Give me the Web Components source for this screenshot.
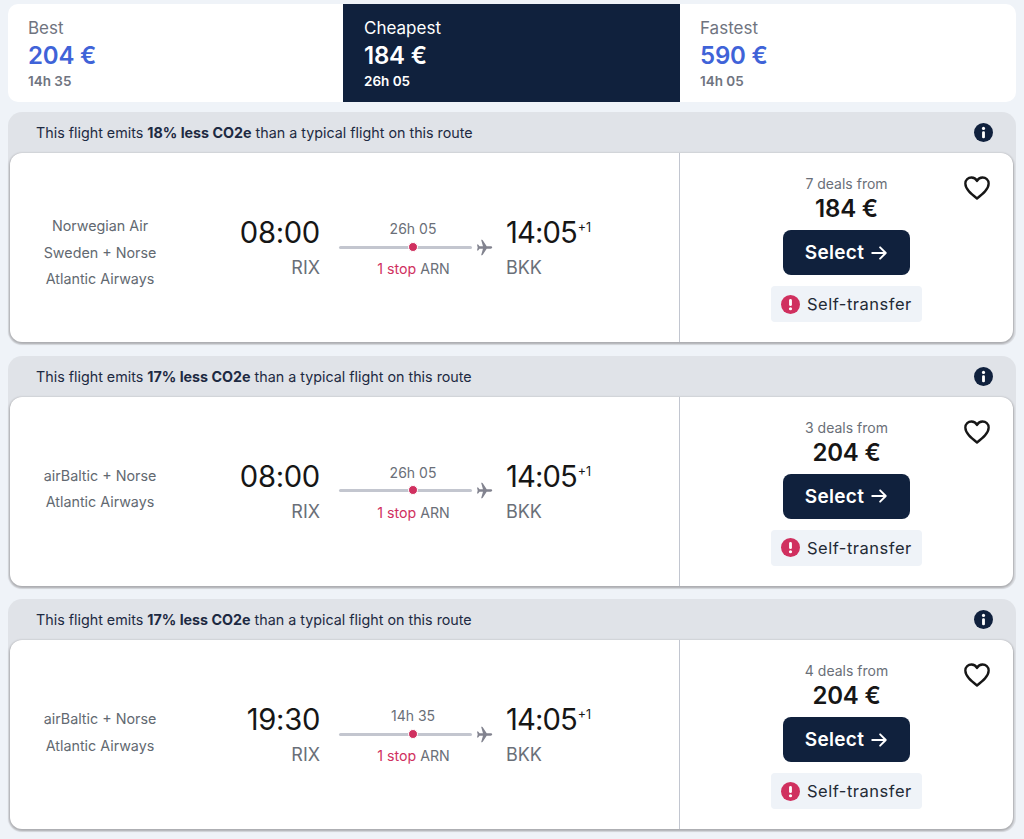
<!DOCTYPE html>
<html>
<head>
<meta charset="utf-8">
<title>Flights</title>
<style>
  html, body { margin: 0; padding: 0; background: #eff3f8; }
  body { font-family: Inter, "Liberation Sans", sans-serif; width: 1024px; height: 839px; overflow: hidden; }
  main { display: flex; flex-direction: column; gap: 10px; padding: 4px 8px 0; }
  .results { display: flex; flex-direction: column; gap: 10.5px; }
</style>
</head>
<body>
<main>
  <sort-tabs>
    <sort-tab label="Best" price="204 €" time="14h 35"></sort-tab>
    <sort-tab label="Cheapest" price="184 €" time="26h 05" active></sort-tab>
    <sort-tab label="Fastest" price="590 €" time="14h 05"></sort-tab>
  </sort-tabs>
  <div class="results">
    <flight-card long percent="18" depart="08:00" duration="26h 05" deals="7 deals from" price="184 €">
      <span>Norwegian Air</span><span>Sweden + Norse</span><span>Atlantic Airways</span>
    </flight-card>
    <flight-card percent="17" depart="08:00" duration="26h 05" deals="3 deals from" price="204 €">
      <span>airBaltic + Norse</span><span>Atlantic Airways</span>
    </flight-card>
    <flight-card percent="17" depart="19:30" duration="14h 35" deals="4 deals from" price="204 €">
      <span>airBaltic + Norse</span><span>Atlantic Airways</span>
    </flight-card>
  </div>
</main>

<script>
class SortTabs extends HTMLElement {
  constructor() {
    super();
    this.attachShadow({ mode: 'open' });
    this.shadowRoot.innerHTML = `
      <style>
        :host {
          display: grid;
          grid-template-columns: 335px 337px 336px;
          height: 98px;
          background: #fff;
          border-radius: 10px;
          overflow: hidden;
        }
      </style>
      <slot></slot>
    `;
  }
}

class SortTab extends HTMLElement {
  constructor() {
    super();
    this.attachShadow({ mode: 'open' });
    this.shadowRoot.innerHTML = `
      <style>
        :host {
          display: block;
          padding: 14px 20px 0;
          color: #6f7480;
        }
        :host([active]) { background: #10213d; color: #fff; padding-left: 21px; }
        .label { font-size: 17px; line-height: 20px; }
        .price { font-size: 24px; line-height: 32px; margin-top: 2px; font-weight: 600; color: #3f63d8; letter-spacing: -0.2px; }
        :host([active]) .price { color: #fff; }
        .time { font-size: 13.5px; line-height: 20px; margin-top: -1px; font-weight: 600; }
      </style>
      <div class="label"></div>
      <div class="price"></div>
      <div class="time"></div>
    `;
    this.shadowRoot.querySelector('.label').textContent = this.getAttribute('label');
    this.shadowRoot.querySelector('.price').textContent = this.getAttribute('price');
    this.shadowRoot.querySelector('.time').textContent = this.getAttribute('time');
  }
}

class FlightCard extends HTMLElement {
  constructor() {
    super();
    this.attachShadow({ mode: 'open' });
    this.shadowRoot.innerHTML = `
      <style>
        :host {
          display: block;
          height: 233px;
          background: #e0e3e8;
          border-radius: 14px;
          color: #161d2b;
        }
        .eco {
          display: flex;
          align-items: center;
          justify-content: space-between;
          height: 41px;
          padding: 0 23px 0 28px;
          font-size: 14.3px;
          color: #1d2a42;
        }
        .eco b { font-weight: 700; }
        .eco svg { width: 19px; height: 19px; display: block; }
        .card {
          display: grid;
          grid-template-columns: 670px 1fr;
          height: 189px;
          margin: 0 3px 0 2px;
          background: #fff;
          border-radius: 12px;
          box-shadow: 0 1px 2px 1px rgba(37, 32, 31, 0.28);
        }
        .left {
          display: grid;
          grid-template-columns: 180px 1fr;
          align-items: center;
          border-right: 1px solid #c2c6d0;
        }
        .airlines {
          display: flex;
          flex-direction: column;
          align-items: center;
          gap: 6.5px;
          font-size: 14.3px;
          line-height: 20px;
          color: #626971;
          margin-bottom: 4px;
        }
        :host([long]) .airlines { margin: 10px 0 0; }
        ::slotted(span) { display: block; }
        .route {
          display: grid;
          grid-template-columns: 82px auto 1fr;
          margin-left: 48px;
          align-items: start;
        }
        .point { display: flex; flex-direction: column; }
        .point.from { align-items: flex-end; }
        .point.to { margin-left: 13px; }
        .clock { font-size: 29.2px; line-height: 36px; color: #161616; letter-spacing: -0.3px; white-space: nowrap; }
        .to .clock { letter-spacing: -0.9px; }
        .clock sup { font-size: 12.5px; line-height: 0; vertical-align: 11px; letter-spacing: 0; margin-left: 1px; }
        .code { font-size: 18px; line-height: 24px; color: #6a6f78; margin-top: 5px; }
        .mid { display: flex; flex-direction: column; align-items: center; width: 154px; margin-left: 19px; }
        .duration { font-size: 14px; line-height: 17px; padding-top: 5px; color: #6a6f78; width: 148px; text-align: center; margin-right: 6px; }
        .line { display: flex; align-items: center; height: 20px; width: 154px; }
        .track { position: relative; width: 134px; height: 3px; border-radius: 2px; background: #c3c6cf; }
        .dot { position: absolute; left: 69px; top: -4px; width: 8px; height: 8px; border-radius: 50%; background: #d0305f; border: 1.5px solid #fff; }
        .line svg { width: 17px; height: 17px; margin-left: 4px; fill: #82838f; display: block; }
        .stops { font-size: 14.2px; line-height: 20px; margin-top: 2px; color: #6a6f78; width: 148px; text-align: center; margin-right: 5px; }
        .stops span { color: #d0305f; }
        .right { position: relative; display: flex; flex-direction: column; align-items: center; padding-top: 22px; }
        .deals { font-size: 14px; line-height: 18px; color: #6a6f78; }
        .price { font-size: 24px; line-height: 32px; font-weight: 600; color: #161616; letter-spacing: -0.2px; }
        .select {
          display: flex;
          align-items: center;
          justify-content: center;
          gap: 6px;
          box-sizing: border-box;
          width: 127px;
          height: 45px;
          margin-top: 5px;
          background: #10213d;
          color: #fff;
          border: 0;
          border-radius: 8px;
          font: 600 19px Inter, "Liberation Sans", sans-serif;
          letter-spacing: 0.3px;
        }
        .select svg { width: 18px; height: 18px; display: block; }
        .warn {
          display: flex;
          align-items: center;
          gap: 7px;
          box-sizing: border-box;
          width: 151px;
          height: 36px;
          margin-top: 11px;
          padding-left: 10px;
          background: #eff3f8;
          border-radius: 4px;
          font-size: 16.5px;
          letter-spacing: 0.5px;
          color: #232a35;
        }
        .warn svg { width: 19px; height: 19px; flex: none; display: block; }
        .heart { position: absolute; top: 21px; right: 22px; width: 28px; height: 28px; display: block; }
      </style>
      <div class="eco">
        <div>This flight emits <b>${this.getAttribute('percent')}% less CO2e</b> than a typical flight on this route</div>
        <svg viewBox="0 0 24 24"><circle cx="12" cy="12" r="12" fill="#10213d"/><circle cx="12" cy="6.8" r="2" fill="#fff"/><rect x="10.2" y="10.4" width="3.6" height="8.8" rx="1.6" fill="#fff"/></svg>
      </div>
      <div class="card">
        <div class="left">
          <div class="airlines"><slot></slot></div>
          <div class="route">
            <div class="point from">
              <div class="clock">${this.getAttribute('depart')}</div>
              <div class="code">RIX</div>
            </div>
            <div class="mid">
              <div class="duration">${this.getAttribute('duration')}</div>
              <div class="line">
                <div class="track"><div class="dot"></div></div>
                <svg viewBox="0 0 24 24"><path d="M23 12c0-1-1-1.700-2.200-1.700h-5.600L9.600 1.600C9.400 1.300 9 1 8.600 1H7.300l2.600 9.300H5L3 7.700H1.400l1 4.300-1 4.300H3l2-2.600h4.900L7.300 23h1.300c.4 0 .8-.3 1-.6l5.600-8.700h5.600C22 13.700 23 13 23 12z"/></svg>
              </div>
              <div class="stops"><span>1 stop</span> ARN</div>
            </div>
            <div class="point to">
              <div class="clock">14:05<sup>+1</sup></div>
              <div class="code">BKK</div>
            </div>
          </div>
        </div>
        <div class="right">
          <div class="deals">${this.getAttribute('deals')}</div>
          <div class="price">${this.getAttribute('price')}</div>
          <button class="select">Select <svg viewBox="0 0 24 24" fill="none" stroke="#fff" stroke-width="2.6" stroke-linecap="round" stroke-linejoin="round"><path d="M3 12h18M13.500 4.500 21 12l-7.500 7.500"/></svg></button>
          <div class="warn">
            <svg viewBox="0 0 24 24"><circle cx="12" cy="12" r="12" fill="#d0305f"/><rect x="10.200" y="5" width="3.600" height="9" rx="1.800" fill="#fff"/><circle cx="12" cy="17.400" r="2" fill="#fff"/></svg>
            <span>Self-transfer</span>
          </div>
          <svg class="heart" viewBox="0 0 24 24" fill="none" stroke="#161616" stroke-width="2" stroke-linejoin="round"><path d="M12 21C7 17 2 13 2 8.200 2 5 4.500 3 7.200 3 9.200 3 11 4 12 6c1-2 2.800-3 4.800-3C19.500 3 22 5 22 8.200 22 13 17 17 12 21z"/></svg>
        </div>
      </div>
    `;
  }
}

customElements.define('sort-tabs', SortTabs);
customElements.define('sort-tab', SortTab);
customElements.define('flight-card', FlightCard);
</script>
</body>
</html>
